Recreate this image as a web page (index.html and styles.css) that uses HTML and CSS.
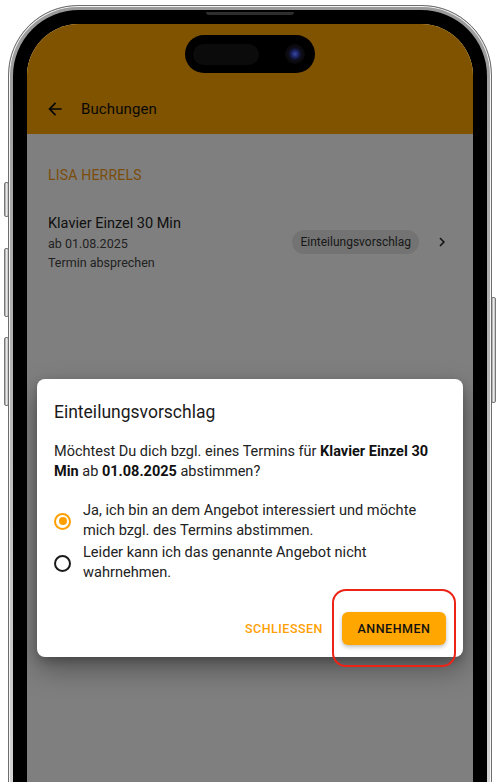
FILE: index.html
```html
<!DOCTYPE html>
<html lang="de">
<head>
<meta charset="utf-8">
<title>Buchungen</title>
<link rel="stylesheet" href="styles.css">
</head>
<body>
<div class="device">
  <span class="side-btn btn-action"></span>
  <span class="side-btn btn-vol-up"></span>
  <span class="side-btn btn-vol-down"></span>
  <span class="side-btn btn-power"></span>
  <div class="rim">
    <div class="bezel">
      <span class="speaker"></span>
      <div class="screen">
        <div class="island"><span class="island-sensor"></span><span class="island-cam"></span></div>
        <header class="appbar">
          <div class="appbar-row">
            <svg class="back" viewBox="0 0 24 24" width="20" height="20"><path d="M20 11H7.83l5.59-5.59L12 4l-8 8 8 8 1.41-1.41L7.83 13H20v-2z" fill="#111"/></svg>
            <span class="appbar-title">Buchungen</span>
          </div>
        </header>
        <main class="content">
          <h2 class="section">LISA HERRELS</h2>
          <div class="booking">
            <div class="booking-text">
              <div class="booking-title">Klavier Einzel 30 Min</div>
              <div class="booking-sub">ab 01.08.2025</div>
              <div class="booking-sub">Termin absprechen</div>
            </div>
            <span class="chip">Einteilungsvorschlag</span>
            <svg class="chevron" viewBox="0 0 24 24" width="18" height="18"><path d="M8.6 16.6 13.2 12 8.6 7.4 10 6l6 6-6 6z" fill="#222"/></svg>
          </div>
        </main>
        <div class="scrim"></div>
        <div class="dialog">
          <h3 class="dialog-title">Einteilungsvorschlag</h3>
          <p class="dialog-text">Möchtest Du dich bzgl. eines Termins für <b>Klavier Einzel 30 Min</b> ab <b>01.08.2025</b> abstimmen?</p>
          <div class="options">
            <label class="option">
              <span class="radio checked"></span>
              <span class="option-text">Ja, ich bin an dem Angebot interessiert und möchte mich bzgl. des Termins abstimmen.</span>
            </label>
            <label class="option">
              <span class="radio"></span>
              <span class="option-text">Leider kann ich das genannte Angebot nicht wahrnehmen.</span>
            </label>
          </div>
          <div class="actions">
            <button class="btn-text">SCHLIESSEN</button>
            <button class="btn-primary">ANNEHMEN</button>
          </div>
          <span class="highlight"></span>
        </div>
      </div>
    </div>
  </div>
</div>
</body>
</html>
```

FILE: styles.css
```css
* { box-sizing: border-box; }
html, body { margin: 0; padding: 0; }
body {
  background: #fff;
  width: 500px;
  height: 782px;
  overflow: hidden;
  font-family: Roboto, "Noto Sans", "Liberation Sans", sans-serif;
}

.device {
  position: relative;
  margin: 5px 0 0 8px;
  width: 484px;
  height: 860px;
}

.side-btn {
  position: absolute;
  width: 5px;
  background: linear-gradient(90deg, #8a8a8a, #f2f2f2 40%, #bdbdbd);
  border: 1px solid #777;
  border-radius: 2px;
}
.btn-action { left: -4px; top: 177px; height: 35px; }
.btn-vol-up { left: -4px; top: 243px; height: 69px; }
.btn-vol-down { left: -4px; top: 332px; height: 69px; }
.btn-power { right: -4px; top: 292px; height: 106px; }

.rim {
  position: relative;
  height: 100%;
  border-radius: 70px;
  padding: 4px;
  background: linear-gradient(180deg, #9a9a9a, #d9d9d9);
  border: 1px solid #6d6d6d;
  box-shadow: inset 0 0 0 1px #f5f5f5;
}

.bezel {
  position: relative;
  height: 100%;
  background: #000;
  border-radius: 66px;
  padding: 14px 14px 0 14px;
}

.speaker {
  position: absolute;
  left: 193px;
  top: 2px;
  width: 88px;
  height: 3px;
  border-radius: 0 0 3px 3px;
  background: #2e2e2e;
}

.screen {
  position: relative;
  height: 100%;
  background: #fff;
  border-radius: 52px 52px 0 0;
  overflow: hidden;
}

.island {
  position: absolute;
  left: 158px;
  top: 11px;
  width: 130px;
  height: 38px;
  border-radius: 19px;
  background: #000;
  z-index: 5;
}
.island-sensor {
  position: absolute;
  left: 8px;
  top: 9px;
  width: 66px;
  height: 21px;
  border-radius: 11px;
  background: #0b0b0b;
}
.island-cam {
  position: absolute;
  left: 100px;
  top: 9px;
  width: 20px;
  height: 20px;
  border-radius: 50%;
  background: radial-gradient(circle, #3a4aa8 0, #1b2260 25%, #0d0d1a 45%, #080808 70%);
}

.appbar {
  height: 110px;
  background: #ffa600;
  padding-top: 60px;
}
.appbar-row {
  height: 50px;
  display: flex;
  align-items: center;
  padding-left: 18px;
}
.back { display: block; }
.appbar-title {
  margin-left: 16px;
  font-size: 15px;
  color: #111;
  letter-spacing: 0.1px;
}

.content {
  padding: 0 22px 0 21px;
}
.section {
  margin: 0;
  padding-top: 32px;
  font-size: 14px;
  line-height: 18px;
  font-weight: 400;
  color: #f59a14;
  letter-spacing: 0.2px;
}
.booking {
  display: flex;
  align-items: center;
  margin-top: 30px;
}
.booking-text { flex: 1; }
.booking-title {
  font-size: 14.5px;
  line-height: 20px;
  color: #222;
}
.booking-sub {
  font-size: 12.5px;
  line-height: 19px;
  color: #444;
}
.chip {
  height: 24px;
  line-height: 24px;
  padding: 0 8px;
  border-radius: 12px;
  background: #e6e6e6;
  color: #333;
  font-size: 12px;
  margin-top: -3px;
}
.chevron { margin-left: 14px; margin-top: -3px; display: block; }

.scrim {
  position: absolute;
  inset: 0;
  background: rgba(0, 0, 0, 0.5);
  z-index: 2;
}

.dialog {
  position: absolute;
  left: 10px;
  top: 355px;
  width: 426px;
  height: 278px;
  background: #fff;
  border-radius: 8px;
  padding: 21px 17px 12px 17px;
  z-index: 3;
  box-shadow: 0 12px 28px rgba(0, 0, 0, 0.35), 0 4px 10px rgba(0, 0, 0, 0.2);
}
.dialog-title {
  margin: 0;
  font-size: 17.5px;
  line-height: 24px;
  font-weight: 400;
  color: #1a1a1a;
}
.dialog-text {
  margin: 18px 0 0 0;
  font-size: 14.5px;
  line-height: 20px;
  color: #222;
}
.dialog-text b { font-weight: 700; color: #111; }

.options {
  margin-top: 18px;
  display: flex;
  flex-direction: column;
  gap: 2px;
}
.option {
  display: flex;
  align-items: center;
}
.radio {
  flex: none;
  width: 17px;
  height: 17px;
  border-radius: 50%;
  border: 2px solid #1a1a1a;
  margin-top: 2px;
  position: relative;
}
.radio.checked { border-color: #ffa000; }
.radio.checked::after {
  content: "";
  position: absolute;
  left: 2.5px;
  top: 2.5px;
  width: 8px;
  height: 8px;
  border-radius: 50%;
  background: #ffa000;
}
.option-text {
  margin-left: 12px;
  font-size: 14.6px;
  line-height: 20px;
  color: #222;
}

.actions {
  display: flex;
  justify-content: flex-end;
  align-items: center;
  margin-top: 30px;
  gap: 11px;
}
.btn-text {
  border: 0;
  background: none;
  font-family: inherit;
  font-size: 12.5px;
  font-weight: 500;
  letter-spacing: 0.5px;
  color: #ffa000;
  padding: 8px 8px;
}
.btn-primary {
  border: 0;
  font-family: inherit;
  font-size: 12.5px;
  font-weight: 500;
  letter-spacing: 0.5px;
  color: #111;
  background: #ffa600;
  height: 33px;
  width: 104px;
  border-radius: 6px;
  box-shadow: 0 2px 4px rgba(0, 0, 0, 0.25);
}

.highlight {
  position: absolute;
  left: 295px;
  top: 210px;
  width: 124px;
  height: 78px;
  border: 2.5px solid #ec2418;
  border-radius: 14px;
  pointer-events: none;
}
```
